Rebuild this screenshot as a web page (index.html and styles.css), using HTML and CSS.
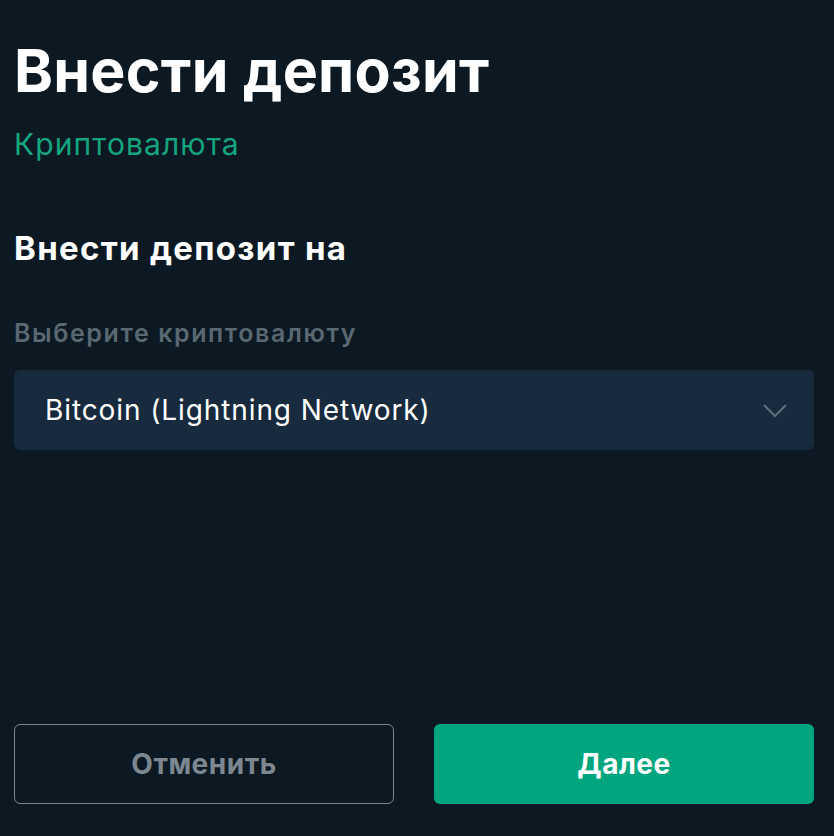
FILE: index.html
```html
<!DOCTYPE html>
<html>
<head>
  <title>Внести депозит</title>
  <link rel="stylesheet" href="styles.css">
</head>
<body>
  <div class="page">
    <h1 class="title">Внести депозит</h1>
    <div class="subtitle">Криптовалюта</div>

    <h2 class="section-title">Внести депозит на</h2>
    <div class="field-label">Выберите криптовалюту</div>
    <div class="select">
      <span class="select-value">Bitcoin (Lightning Network)</span>
      <svg class="chevron" width="26" height="16" viewBox="0 0 26 16" fill="none">
        <path d="M2 3l11 11L24 3" stroke="#5f6f7a" stroke-width="2"/>
      </svg>
    </div>

    <div class="actions">
      <button class="btn btn-cancel">Отменить</button>
      <button class="btn btn-next">Далее</button>
    </div>
  </div>
</body>
</html>
```
FILE: styles.css
```css
html, body {
  margin: 0;
  height: 100%;
}

body {
  background: #0c1923;
  font-family: Inter, "Noto Sans", sans-serif;
  color: #fff;
}

.page {
  box-sizing: border-box;
  height: 100%;
  display: flex;
  flex-direction: column;
  padding: 0 20px 32px 14px;
}

.title {
  margin: 36px 0 0 0;
  font-size: 59px;
  line-height: 70px;
  font-weight: 700;
  letter-spacing: 0.3px;
}

.subtitle {
  margin-top: 20px;
  font-size: 30px;
  line-height: 36px;
  color: #14a57f;
  letter-spacing: 1.1px;
}

.section-title {
  margin: 66px 0 0 0;
  font-size: 33px;
  line-height: 40px;
  font-weight: 700;
  letter-spacing: 1.3px;
}

.field-label {
  margin-top: 49px;
  font-size: 25px;
  line-height: 32px;
  font-weight: 600;
  color: #5a6871;
  letter-spacing: 1.6px;
}

.select {
  margin-top: 21px;
  height: 80px;
  border-radius: 6px;
  background: #172a3e;
  display: flex;
  align-items: center;
  justify-content: space-between;
  padding: 0 26px 0 31px;
}

.select-value {
  font-size: 28px;
  letter-spacing: 0.9px;
}

.actions {
  margin-top: auto;
  display: grid;
  grid-template-columns: 1fr 1fr;
  gap: 40px;
}

.btn {
  box-sizing: border-box;
  height: 80px;
  border-radius: 6px;
  font-family: inherit;
  font-size: 28px;
  font-weight: 700;
  letter-spacing: 0.5px;
  cursor: pointer;
}

.btn-cancel {
  background: transparent;
  border: 1px solid #7d878f;
  color: #7c8790;
}

.btn-next {
  background: #01a67e;
  border: none;
  color: #fff;
}
```
